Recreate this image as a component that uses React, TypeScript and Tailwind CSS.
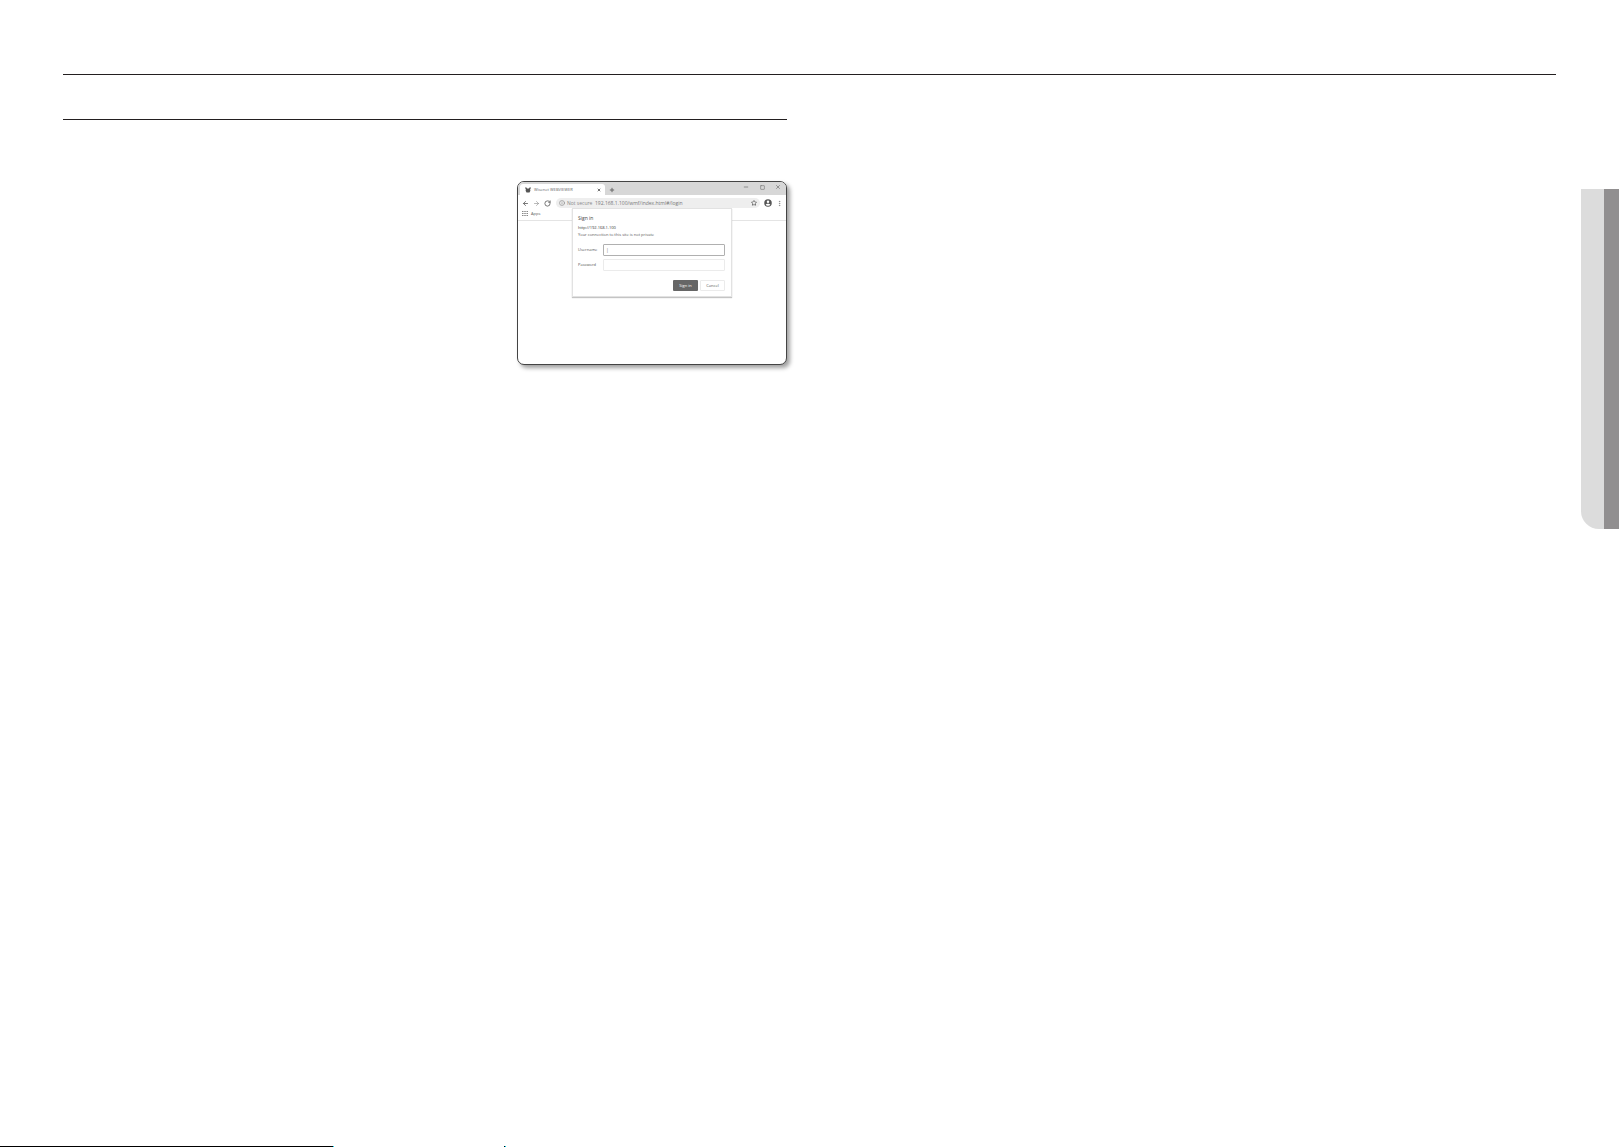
import React from 'react'
import {
  ArrowLeft,
  ArrowRight,
  EllipsisVertical,
  Info,
  Minus,
  Plus,
  RotateCw,
  Square,
  Star,
  X,
} from 'lucide-react'

const styles = {
  iconBtn: "flex items-center justify-center h-2 w-2 shrink-0",
  label: "w-[25px] shrink-0 text-[4px] text-[#555555]",
  field: "h-3 min-w-0 flex-1 border bg-white px-[2px] text-[5px] outline-none rounded-[1px]",
  button: "h-[11px] w-[25px] rounded-[1px] text-[4px]",
};

const WebViewerIcon = () => (
  <svg viewBox="0 0 12 12" className="h-[6px] w-[6px]" fill="#555555">
    <path d="M0 1h3l1 2h4l1-2h3l-2 5 1 1-2 4H3L1 7l1-1z" />
  </svg>
)

const AppsIcon = () => (
  <svg viewBox="0 0 12 10" className="h-[5px] w-[6px]" fill="#888888">
    <path d="M0 0h3v2H0zM4.500 0h3v2h-3zM9 0h3v2H9zM0 4h3v2H0zM4.500 4h3v2h-3zM9 4h3v2H9zM0 8h3v2H0zM4.500 8h3v2h-3zM9 8h3v2H9z" />
  </svg>
)

const ProfileIcon = () => (
  <svg viewBox="0 0 16 16" className="h-2 w-2">
    <circle cx="8" cy="8" r="7.500" fill="#555555" />
    <circle cx="8" cy="5.500" r="2.500" fill="#ffffff" />
    <path d="M3.500 11.500c1-2.500 8-2.500 9 0-1.500 2.500-7.500 2.500-9 0z" fill="#ffffff" />
  </svg>
)

const TabStrip = () => (
  <div className="flex h-[13px] items-end bg-[#d7d7d7] pl-[2px] pr-1">
    <div className="flex h-[11px] w-[85px] items-center rounded-t-[3px] bg-white pl-[5px] pr-1">
      <WebViewerIcon />
      <span className="ml-[3px] text-[4px] text-[#666666]">Wisenet WEBVIEWER</span>
      <button type="button" aria-label="Close tab" className="ml-auto flex h-1 w-1 items-center justify-center">
        <X size={4} strokeWidth={5} color="#555555" className="shrink-0" />
      </button>
    </div>
    <button type="button" aria-label="New tab" className="ml-[3px] flex h-[11px] w-2 items-center justify-center">
      <Plus size={6} strokeWidth={4} color="#666666" />
    </button>
    <div className="ml-auto flex h-[13px] items-start gap-2 pt-px">
      <button type="button" aria-label="Minimize" className={styles.iconBtn}>
        <Minus size={6} strokeWidth={3} color="#777777" />
      </button>
      <button type="button" aria-label="Maximize" className={styles.iconBtn}>
        <Square size={5} strokeWidth={3} color="#777777" />
      </button>
      <button type="button" aria-label="Close" className={styles.iconBtn}>
        <X size={6} strokeWidth={3} color="#777777" />
      </button>
    </div>
  </div>
)

const Toolbar = () => (
  <div className="flex h-4 items-center gap-[3px] px-[3px]">
    <button type="button" aria-label="Back" className={styles.iconBtn}>
      <ArrowLeft size={7} strokeWidth={3} color="#666666" />
    </button>
    <button type="button" aria-label="Forward" className={styles.iconBtn}>
      <ArrowRight size={7} strokeWidth={2} color="#888888" />
    </button>
    <button type="button" aria-label="Reload" className={styles.iconBtn}>
      <RotateCw size={7} strokeWidth={3} color="#666666" />
    </button>
    <div className="ml-[2px] flex h-[10px] min-w-0 flex-1 items-center rounded-full bg-[#eeeeee] pl-[3px] pr-[2px]">
      <Info size={6} strokeWidth={2} color="#777777" className="shrink-0" />
      <label htmlFor="address" className="ml-[2px] w-7 shrink-0 text-[5px] leading-2 text-[#888888]">Not secure</label>
      <input
        id="address"
        type="text"
        defaultValue="192.168.1.100/wmf/index.html#/login"
        className="h-2 min-w-0 flex-1 bg-transparent text-[5px] leading-2 text-[#777777] outline-none"
      />
      <button type="button" aria-label="Bookmark" className={styles.iconBtn}>
        <Star size={6} strokeWidth={4} color="#777777" />
      </button>
    </div>
    <button type="button" aria-label="Profile" className="ml-px flex h-2 w-2 items-center justify-center">
      <ProfileIcon />
    </button>
    <button type="button" aria-label="Menu" className={styles.iconBtn}>
      <EllipsisVertical size={7} strokeWidth={2} color="#777777" />
    </button>
  </div>
)

const SignInDialog = () => (
  <form
    onSubmit={(e) => e.preventDefault()}
    className="absolute left-1/2 top-[26px] w-[160px] -translate-x-1/2 border border-[#e2e2e2] bg-white py-[5px] pl-[5px] pr-[6px] shadow-[0_1px_1px_#c4c4c4]"
  >
    <h2 className="text-[5px] leading-2 text-[#444444]">Sign in</h2>
    <p className="mt-[2px] text-[4px] leading-[7px] text-[#333333]">http://192.168.1.100</p>
    <p className="text-[4px] leading-[7px] text-[#555555]">Your connection to this site is not private</p>
    <div className="mt-[6px] flex items-center">
      <label htmlFor="username" className={styles.label}>Username</label>
      <input id="username" type="text" defaultValue="|" className={`${styles.field} border-[#b0b0b0] text-[#777777]`} />
    </div>
    <div className="mt-[3px] flex items-center">
      <label htmlFor="password" className={styles.label}>Password</label>
      <input id="password" type="password" className={`${styles.field} border-[#ebebeb]`} />
    </div>
    <div className="mt-[9px] flex justify-end gap-[2px]">
      <button type="submit" className={`${styles.button} bg-[#666666] text-white`}>Sign in</button>
      <button type="button" className={`${styles.button} border border-[#ebebeb] text-[#555555]`}>Cancel</button>
    </div>
  </form>
)

const BrowserWindow = () => (
  <div className="relative ml-auto mt-[61px] h-[184px] w-[270px] rounded-[7px] border border-[#444444] bg-white shadow-[3px_3px_4px_#a0a0a0]">
    <div className="overflow-hidden rounded-t-[6px]">
      <TabStrip />
      <Toolbar />
      <div className="flex h-[10px] items-start gap-[3px] border-b border-[#e4e4e4] pl-1">
        <AppsIcon />
        <span className="text-[4px] leading-[6px] text-[#555555]">Apps</span>
      </div>
    </div>
    <SignInDialog />
  </div>
)

const App = () => {
  return (
    <div className="flex min-h-screen flex-col bg-white font-['Open_Sans',sans-serif]">
      <hr className="ml-[63px] mr-16 mt-[74px] border-t border-[#231f20]" />
      <div className="flex flex-1 items-start pl-[63px] pr-px">
        <main className="mr-[25px] grid flex-1 grid-cols-2 gap-[45px]">
          <section className="pt-11">
            <hr className="border-t border-[#231f20]" />
            <BrowserWindow />
          </section>
        </main>
        <aside className="mt-[114px] flex h-[340px] w-[38px] overflow-hidden rounded-bl-[18px] bg-[#dcdcdc]">
          <div className="ml-auto w-[15px] bg-[#918f90]" />
        </aside>
      </div>
      <footer className="flex h-px">
        <div className="w-[333px] bg-black" />
        <div className="w-px bg-cyan-400" />
        <div className="ml-[170px] w-px bg-black" />
        <div className="w-px bg-cyan-400" />
      </footer>
    </div>
  )
}

export default App
